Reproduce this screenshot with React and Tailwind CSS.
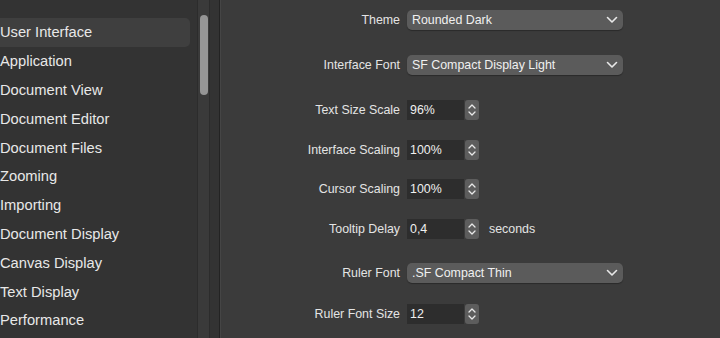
import React from 'react';

const items = [
  'User Interface', 'Application', 'Document View', 'Document Editor', 'Document Files',
  'Zooming', 'Importing', 'Document Display', 'Canvas Display', 'Text Display', 'Performance',
];

const Chevron = () => (
  <svg width="12" height="8" viewBox="0 0 12 8" className="text-[#e8e8e8]">
    <path d="M1.5 1.5 L6 6 L10.5 1.5" fill="none" stroke="currentColor" strokeWidth="1.6" strokeLinecap="round" strokeLinejoin="round" />
  </svg>
);

const Stepper = () => (
  <div className="w-[14px] h-[20px] bg-[#5d5d5d] rounded-[3px] flex items-center justify-center">
    <svg width="8" height="14" viewBox="0 0 8 14" className="text-[#e8e8e8]">
      <path d="M1 5 L4 2 L7 5 M1 9 L4 12 L7 9" fill="none" stroke="currentColor" strokeWidth="1.3" strokeLinecap="round" strokeLinejoin="round" />
    </svg>
  </div>
);

const Row = ({ label, mt, children }) => (
  <div className="flex items-center h-[20px]" style={{ marginTop: mt }}>
    <div className="w-[180px] pr-[1px] text-right text-[12.4px] text-[#e4e4e4]">{label}</div>
    <div className="ml-[6px] flex items-center">{children}</div>
  </div>
);

const Select = ({ value }) => (
  <div className="w-[216px] h-[20px] bg-[#5b5b5b] rounded-[5px] flex items-center justify-between pl-[5px] pr-[5px] shadow-[0_1px_1px_rgba(0,0,0,0.3)]">
    <span className="text-[12.4px] text-[#f0f0f0]">{value}</span>
    <Chevron />
  </div>
);

const Num = ({ value }) => (
  <div className="flex items-center gap-[1px]">
    <div className="w-[57px] h-[20px] bg-[#2d2d2d] flex items-center pl-[3px] text-[12.4px] text-[#f0f0f0]">{value}</div>
    <Stepper />
  </div>
);

export default function App() {
  return (
    <div className="w-[720px] h-[338px] overflow-hidden flex bg-[#3b3b3b]" style={{ fontFamily: '"Liberation Sans", Arial, sans-serif' }}>
      <div className="w-[219px] h-full bg-[#333333] flex shrink-0">
        <div className="w-[197px] pt-[18px] flex flex-col">
          {items.map((t, i) => (
            <div
              key={t}
              className={`h-[28.8px] shrink-0 w-[190px] flex items-center text-[14.7px] text-[#e8e8e8] ${i === 0 ? 'bg-[#3f3f3f] rounded-r-[5px]' : ''}`}
            >
              {t}
            </div>
          ))}
        </div>
        <div className="w-[13px] h-full bg-[#3a3a3a] border-x border-[#2c2c2c] flex justify-center pt-[15px]">
          <div className="w-[8px] h-[80px] bg-[#959595] rounded-full" />
        </div>
      </div>
      <div className="w-[2px] h-full flex shrink-0">
        <div className="w-[1px] bg-[#232323]" />
        <div className="w-[1px] bg-[#454545]" />
      </div>
      <div className="flex-1 flex flex-col pt-[10px]">
        <Row label="Theme" mt={0}><Select value="Rounded Dark" /></Row>
        <Row label="Interface Font" mt={25}><Select value="SF Compact Display Light" /></Row>
        <Row label="Text Size Scale" mt={25}><Num value="96%" /></Row>
        <Row label="Interface Scaling" mt={20}><Num value="100%" /></Row>
        <Row label="Cursor Scaling" mt={19}><Num value="100%" /></Row>
        <Row label="Tooltip Delay" mt={20}>
          <Num value="0,4" />
          <span className="ml-[10px] text-[12.4px] text-[#e4e4e4]">seconds</span>
        </Row>
        <Row label="Ruler Font" mt={24}><Select value=".SF Compact Thin" /></Row>
        <Row label="Ruler Font Size" mt={21}><Num value="12" /></Row>
      </div>
    </div>
  );
}
